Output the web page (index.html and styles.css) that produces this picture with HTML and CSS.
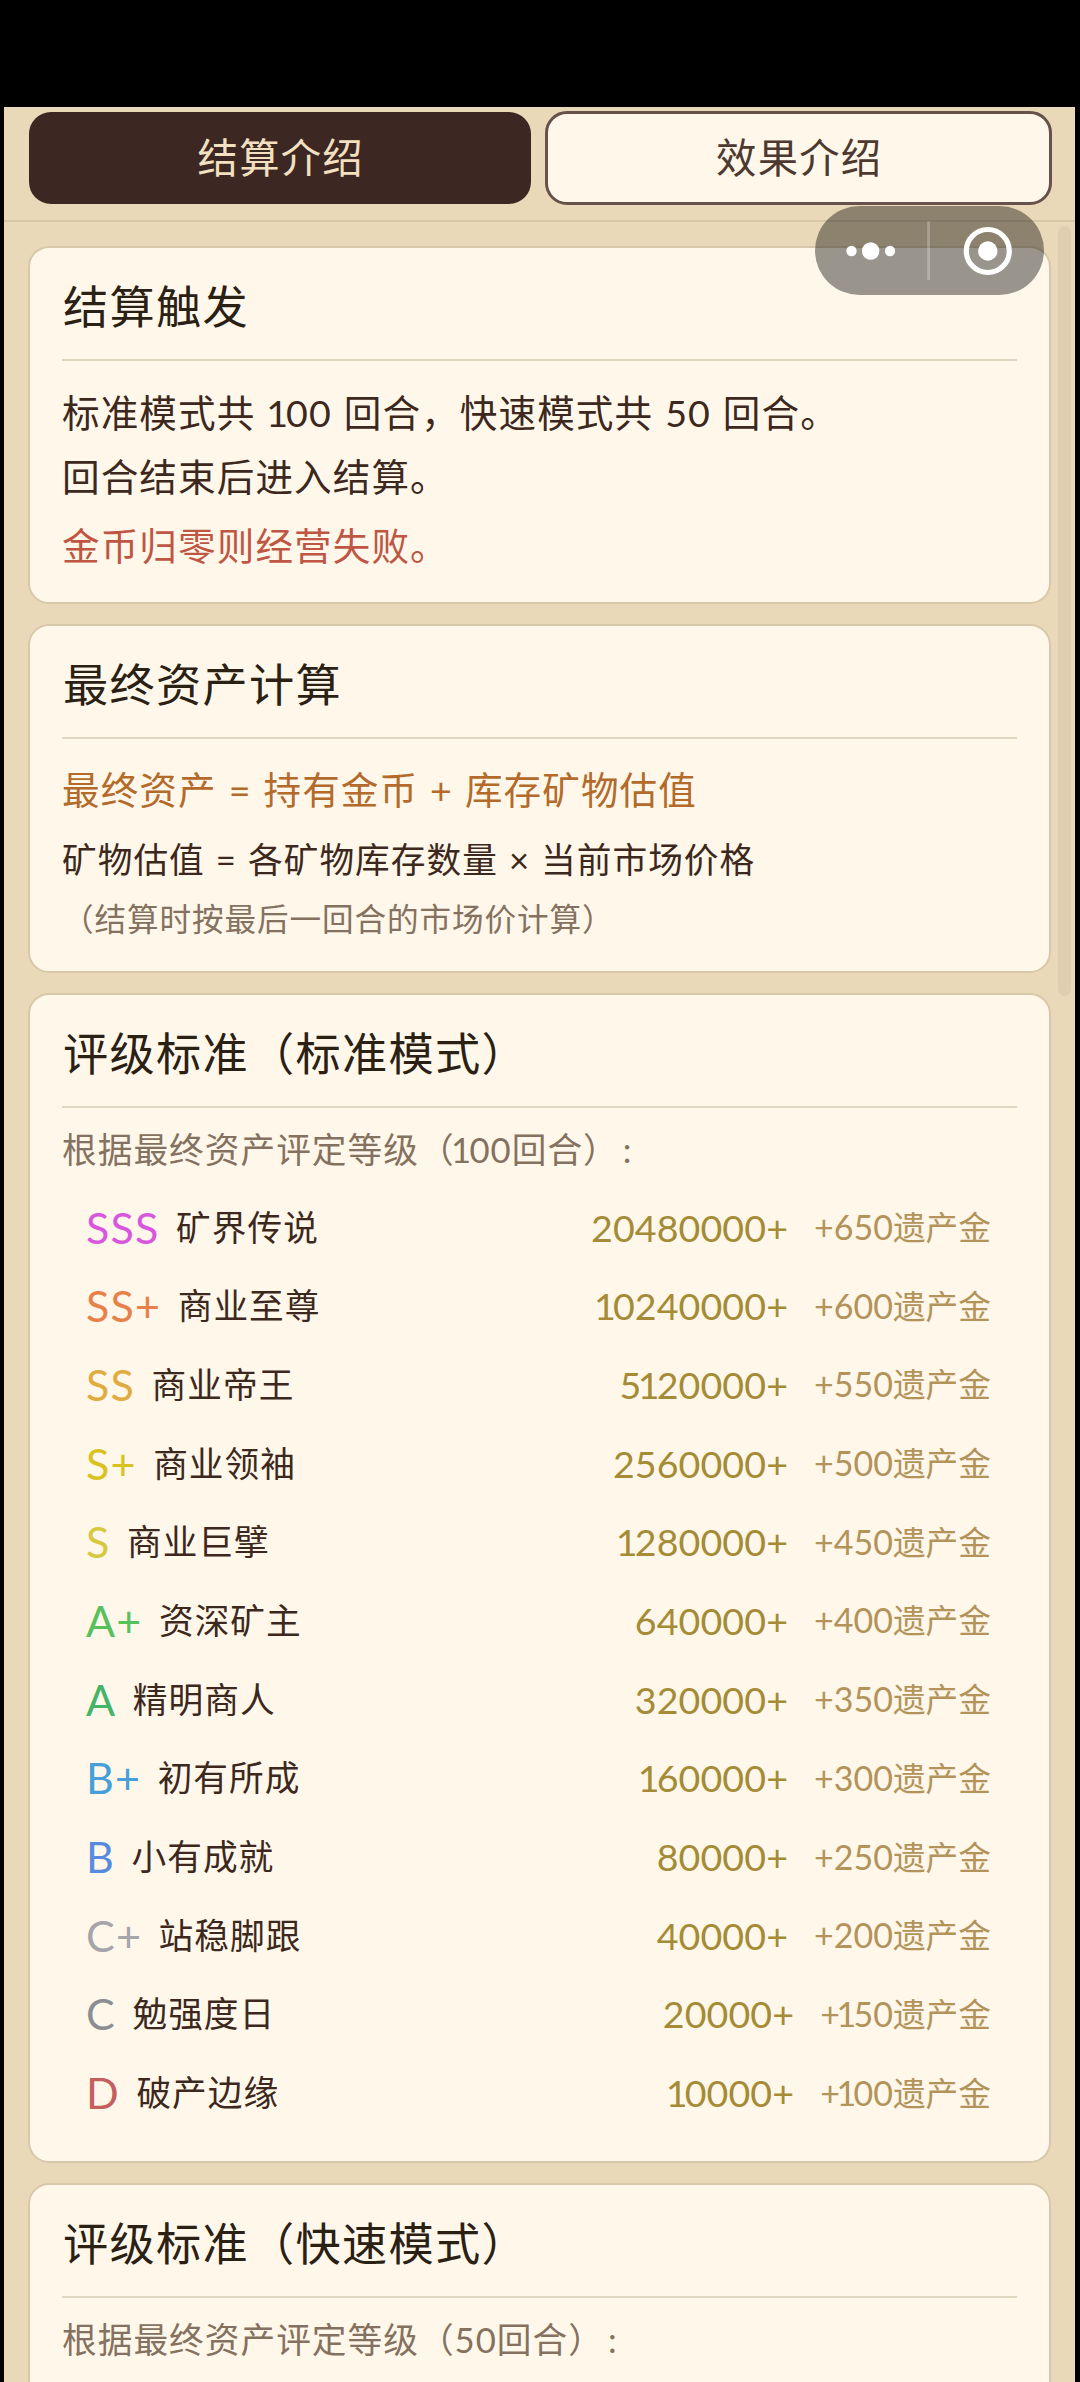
FILE: index.html
```html
<!DOCTYPE html>
<html lang="zh-CN">
<head>
<meta charset="utf-8">
<title>结算介绍</title>
<link rel="stylesheet" href="styles.css">
</head>
<body>
<div class="app">
  <nav class="tabs">
    <div class="tab tab-active">结算介绍</div>
    <div class="tab">效果介绍</div>
  </nav>
  <main class="content">
    <section class="card">
      <h2 class="card-title">结算触发</h2>
      <div class="rules">
        <p class="line">标准模式共 <span class="one">1</span>00 回合，快速模式共 50 回合。</p>
        <p class="line">回合结束后进入结算。</p>
        <p class="line line-danger">金币归零则经营失败。</p>
      </div>
    </section>
    <section class="card">
      <h2 class="card-title">最终资产计算</h2>
      <div class="formula">
        <p class="line line-accent">最终资产 = 持有金币 + 库存矿物估值</p>
        <p class="line-detail">矿物估值 = 各矿物库存数量 × 当前市场价格</p>
        <p class="line-note">（结算时按最后一回合的市场价计算）</p>
      </div>
    </section>
    <section class="card">
      <h2 class="card-title">评级标准（标准模式）</h2>
      <p class="intro">根据最终资产评定等级（<span class="one">1</span>00回合）<span class="colon">:</span></p>
      <ul class="ranks">
        <li class="rank"><span class="grade g-sss">SSS</span><span class="name">矿界传说</span><span class="amount">20480000+</span><span class="reward"><span class="num">+650</span>遗产金</span></li>
        <li class="rank"><span class="grade g-ssp">SS+</span><span class="name">商业至尊</span><span class="amount"><span class="one">1</span>0240000+</span><span class="reward"><span class="num">+600</span>遗产金</span></li>
        <li class="rank"><span class="grade g-ss">SS</span><span class="name">商业帝王</span><span class="amount">5<span class="one">1</span>20000+</span><span class="reward"><span class="num">+550</span>遗产金</span></li>
        <li class="rank"><span class="grade g-sp">S+</span><span class="name">商业领袖</span><span class="amount">2560000+</span><span class="reward"><span class="num">+500</span>遗产金</span></li>
        <li class="rank"><span class="grade g-s">S</span><span class="name">商业巨擘</span><span class="amount"><span class="one">1</span>280000+</span><span class="reward"><span class="num">+450</span>遗产金</span></li>
        <li class="rank"><span class="grade g-ap">A+</span><span class="name">资深矿主</span><span class="amount">640000+</span><span class="reward"><span class="num">+400</span>遗产金</span></li>
        <li class="rank"><span class="grade g-a">A</span><span class="name">精明商人</span><span class="amount">320000+</span><span class="reward"><span class="num">+350</span>遗产金</span></li>
        <li class="rank"><span class="grade g-bp">B+</span><span class="name">初有所成</span><span class="amount"><span class="one">1</span>60000+</span><span class="reward"><span class="num">+300</span>遗产金</span></li>
        <li class="rank"><span class="grade g-b">B</span><span class="name">小有成就</span><span class="amount">80000+</span><span class="reward"><span class="num">+250</span>遗产金</span></li>
        <li class="rank"><span class="grade g-cp">C+</span><span class="name">站稳脚跟</span><span class="amount">40000+</span><span class="reward"><span class="num">+200</span>遗产金</span></li>
        <li class="rank"><span class="grade g-c">C</span><span class="name">勉强度日</span><span class="amount">20000+</span><span class="reward"><span class="num">+<span class="one">1</span>50</span>遗产金</span></li>
        <li class="rank"><span class="grade g-d">D</span><span class="name">破产边缘</span><span class="amount"><span class="one">1</span>0000+</span><span class="reward"><span class="num">+<span class="one">1</span>00</span>遗产金</span></li>
      </ul>
    </section>
    <section class="card card-open">
      <h2 class="card-title">评级标准（快速模式）</h2>
      <p class="intro">根据最终资产评定等级（50回合）<span class="colon">:</span></p>
    </section>
  </main>
  <div class="scrollbar"></div>
  <svg class="capsule" width="229" height="89" viewBox="0 0 229 89">
    <rect width="229" height="89" rx="44.5" fill="#000" fill-opacity=".4"/>
    <rect x="112.2" y="15.5" width="2.8" height="58.5" fill="#fff" fill-opacity=".25"/>
    <g fill="#fff">
      <circle cx="36.5" cy="45" r="5.2"/>
      <circle cx="55.7" cy="45" r="8.7"/>
      <circle cx="75" cy="45" r="5.2"/>
      <circle cx="172.8" cy="45" r="9.7"/>
    </g>
    <circle cx="172.8" cy="45" r="21.5" fill="none" stroke="#fff" stroke-width="5.2"/>
  </svg>
</div>
</body>
</html>
```
FILE: styles.css
```css
* {
  box-sizing: border-box;
  margin: 0;
  padding: 0;
}

body {
  height: 2382px;
  padding: 107px 5px 0 4px;
  overflow: hidden;
  background: #000;
  font-family: Lato, "Noto Sans CJK SC", sans-serif;
  color: #3d2820;
}

.app {
  position: relative;
  height: 2275px;
  overflow: hidden;
  background: #e9d9b8;
}

.tabs {
  display: flex;
  gap: 14px;
  height: 115px;
  padding: 3.5px 23px 0 25px;
  border-bottom: 2px solid #d7c7a7;
}

.tab {
  display: flex;
  flex: 1;
  align-items: center;
  justify-content: center;
  height: 94.5px;
  padding: 0 0 5px 2px;
  border: 3px solid #66524a;
  border-radius: 22px;
  background: #fff8ea;
  color: #4e3930;
  font-size: 40.4px;
  letter-spacing: 1.2px;
}

.tab-active {
  height: 92px;
  margin-top: 1.5px;
  border: 0;
  background: #3c2723;
  color: #f2e0c0;
}

.content {
  display: flex;
  flex-direction: column;
  gap: 20px;
  padding: 23.7px 24px 0;
}

.card {
  flex: none;
  padding: 27px 32px 0;
  border: 2px solid #d7c8aa;
  border-radius: 21px;
  background: #fff8ea;
}

.card-open {
  height: 400px;
}

.card-title {
  padding-bottom: 20px;
  border-bottom: 2px solid #dfd5c0;
  color: #2a2014;
  font-size: 45.2px;
  font-weight: 400;
  letter-spacing: 1.3px;
  line-height: 64px;
  text-indent: 1px;
}

.rules {
  padding: 20px 0 23.5px;
}

.line {
  font-size: 37.6px;
  letter-spacing: 1.1px;
  line-height: 64.5px;
  word-spacing: 1.2px;
}

.line-danger {
  margin-top: 4px;
  color: #bf5543;
}

.line-accent {
  color: #b36a2a;
}

.formula {
  padding: 19px 0 25px;
}

.line-detail {
  margin-top: 8px;
  font-size: 34.7px;
  letter-spacing: 1px;
  line-height: 60px;
  word-spacing: 1.2px;
}

.line-note {
  margin-top: 2px;
  color: #85715f;
  font-size: 31.6px;
  letter-spacing: 0.9px;
  line-height: 54px;
}

.intro {
  margin-top: 11.5px;
  color: #85715f;
  font-size: 34.7px;
  letter-spacing: 1px;
  line-height: 60px;
}

.colon {
  margin-left: 4px;
}

.one {
  margin: 0 -0.08em 0 -0.1em;
}

.line .one {
  margin-left: -0.03em;
}

.ranks {
  padding: 8.5px 26px 28.6px 24px;
  list-style: none;
}

.rank {
  display: flex;
  align-items: center;
  height: 78.7px;
  line-height: 60px;
}

.grade {
  font-size: 43px;
  letter-spacing: 1.2px;
}

.name {
  margin-left: 16.5px;
  font-size: 34.7px;
  letter-spacing: 1px;
}

.amount {
  margin-left: auto;
  color: #a58b35;
  font-size: 37.6px;
  letter-spacing: 0.1px;
}

.reward {
  margin-left: 26px;
  color: #b3935a;
  font-size: 32.7px;
}

.num {
  font-size: 34px;
}

.g-sss { color: #d957dc; }
.g-ssp { color: #e88149; }
.g-ss { color: #e0ac3f; }
.g-sp { color: #d9c220; }
.g-s { color: #d8c83f; }
.g-ap { color: #57c25b; }
.g-a { color: #45b368; }
.g-bp { color: #469fd8; }
.g-b { color: #568be0; }
.g-cp { color: #a5a5ab; }
.g-c { color: #8c8f92; }
.g-d { color: #c45f60; }

.scrollbar {
  position: absolute;
  top: 119px;
  right: 4px;
  width: 13px;
  height: 770px;
  border-radius: 7px;
  background: #dfcfb0;
}

.capsule {
  position: absolute;
  top: 99px;
  left: 811px;
}
```
